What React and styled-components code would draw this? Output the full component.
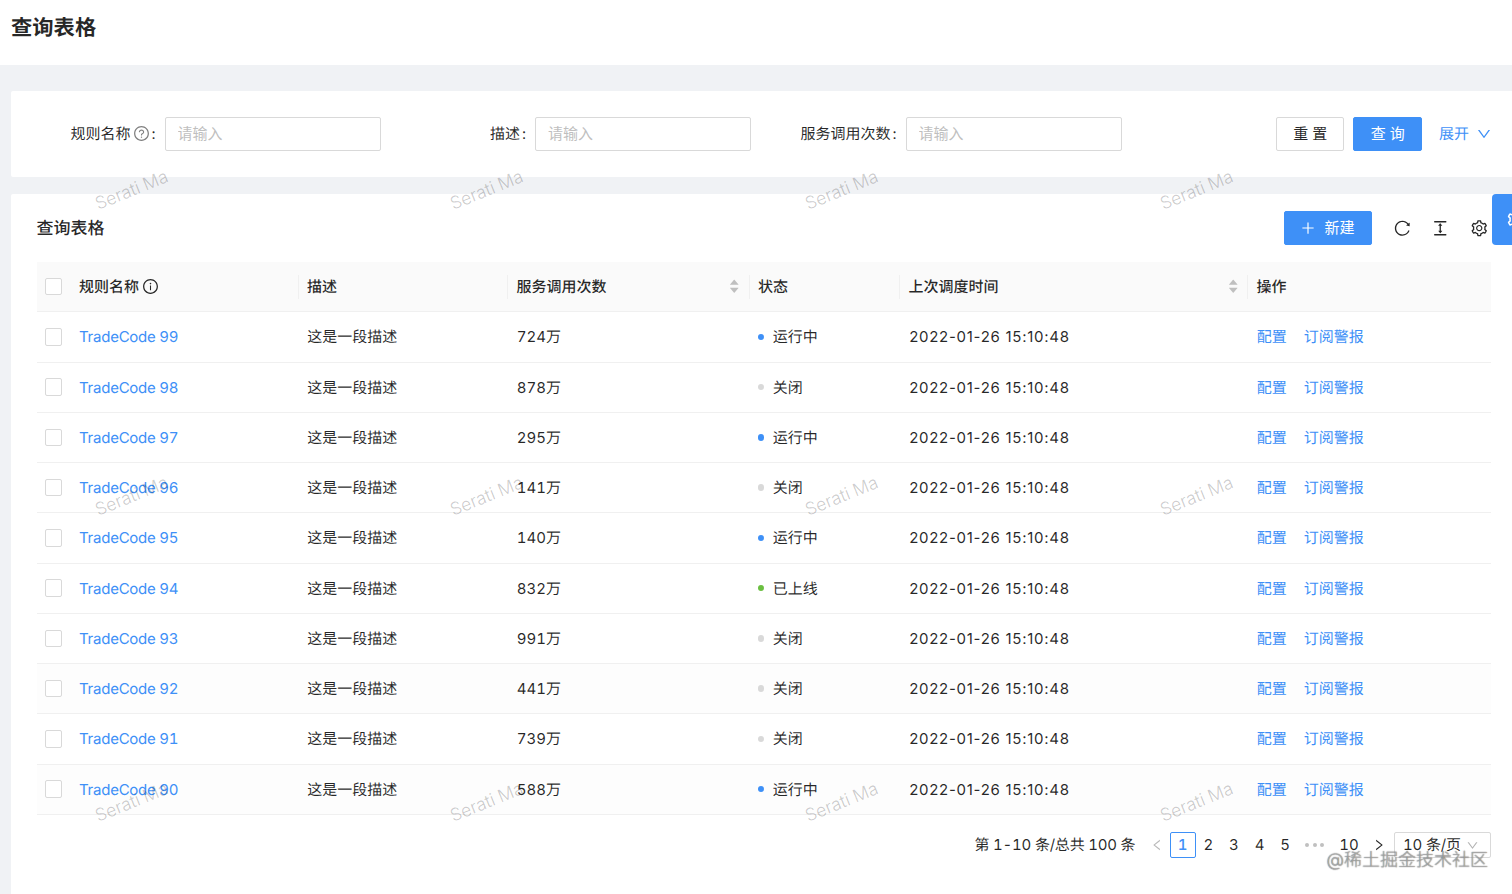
import { useState } from "react";
import styled, { createGlobalStyle, css } from "styled-components";
import {
  AiOutlineQuestionCircle,
  AiOutlineInfoCircle,
  AiOutlineReload,
  AiOutlineColumnHeight,
  AiOutlineSetting,
  AiOutlinePlus,
  AiOutlineDown,
  AiOutlineLeft,
  AiOutlineRight,
  AiFillCaretUp,
  AiFillCaretDown,
} from "react-icons/ai";

const GlobalStyle = createGlobalStyle`
  * {
    box-sizing: border-box;
  }

  body {
    margin: 0;
    overflow: hidden;
    background: #f0f2f5;
    color: rgba(0, 0, 0, 0.85);
    font-family: Inter, "Noto Sans CJK SC", sans-serif;
    font-size: 15px;
    font-variant-numeric: tabular-nums;
    line-height: 24px;
    text-rendering: geometricPrecision;
  }

  button, input {
    font: inherit;
  }
`;

const Page = styled.div`
  position: relative;
  width: 1512px;
  height: 894px;
  overflow: hidden;
  display: flex;
  flex-direction: column;
`;

const PageHeader = styled.header`
  height: 65px;
  padding: 12px 11px 0;
  background: #fff;
`;

const PageTitle = styled.h1`
  margin: 0;
  font-size: 21.3px;
  font-weight: 600;
  line-height: 32px;
`;

const Content = styled.main`
  flex: 1;
  display: flex;
  flex-direction: column;
  gap: 17.5px;
  padding: 26px 0 0 11px;
`;

const FilterCard = styled.section`
  height: 85.5px;
  display: flex;
  align-items: center;
  padding-right: 20px;
  background: #fff;
  border-radius: 2px 0 0 2px;
`;

const Field = styled.label`
  width: ${({ $width }) => $width}px;
  display: flex;
  align-items: center;
  justify-content: flex-end;
  white-space: nowrap;
`;

const HelpIcon = styled(AiOutlineQuestionCircle)`
  margin-left: 3px;
  font-size: 17px;
  color: rgba(0, 0, 0, 0.5);
`;

const Colon = styled.span`
  margin: 0 9px 0 ${({ $tight }) => ($tight ? 1 : 2)}px;
`;

const TextInput = styled.input`
  width: 216px;
  height: 34px;
  padding: 0 12px;
  border: 1px solid #d9d9d9;
  border-radius: 2px;
  outline: none;

  &::placeholder {
    color: #bfbfbf;
  }
`;

const FilterActions = styled.div`
  margin-left: auto;
  display: flex;
  align-items: center;
  gap: 9px;
`;

const Button = styled.button`
  width: ${({ $width }) => $width}px;
  height: 34px;
  display: flex;
  align-items: center;
  justify-content: center;
  gap: ${({ $gap }) => $gap || 0}px;
  padding: 0;
  border: 1px solid #d9d9d9;
  border-radius: 2px;
  background: #fff;
  color: rgba(0, 0, 0, 0.85);
  cursor: pointer;

  ${({ $primary }) =>
    $primary &&
    css`
      border-color: #3e90f7;
      background: #3e90f7;
      color: #fff;
    `}
`;

const ExpandLink = styled.a`
  margin-left: 8px;
  display: flex;
  align-items: center;
  gap: 7px;
  color: #3e90f7;
  cursor: pointer;
`;

const TableCard = styled.section`
  flex: 1;
  padding: 0 21px 0 25.5px;
  background: #fff;
  border-radius: 2px 0 0 0;
`;

const Toolbar = styled.div`
  height: 68px;
  display: flex;
  align-items: center;
  justify-content: space-between;
`;

const ToolbarTitle = styled.h2`
  margin: 0;
  padding-top: 1px;
  font-size: 17px;
  font-weight: 500;
`;

const ToolbarActions = styled.div`
  display: flex;
  align-items: center;
  gap: 20px;
  margin-right: 3px;
  font-size: 18.5px;

  button {
    margin-right: 1px;
    font-size: 15px;
  }
`;

const Row = styled.div`
  height: 50.25px;
  display: grid;
  grid-template-columns: 34px 228px 209.5px 241.5px 150.5px 348px 1fr;
  align-items: center;
  border-bottom: 1px solid #f0f0f0;
  background: ${({ $head, $shaded }) =>
    $head ? "#fafafa" : $shaded ? "#fdfdfd" : "#fff"};
  font-weight: ${({ $head }) => ($head ? 500 : 400)};
`;

const Cell = styled.div`
  height: 24px;
  display: flex;
  align-items: center;
  padding: 0 8.5px;
  white-space: nowrap;
  border-right: ${({ $divider }) => ($divider ? "1px solid #f0f0f0" : "0")};
`;

const BodyCell = styled(Cell)`
  padding: 1px 8.5px 0 8.8px;
  height: 25px;
`;

const NameCell = styled(BodyCell)`
  padding-left: 8.5px;
  letter-spacing: -0.24px;
`;

const TimeCell = styled(BodyCell)`
  padding-left: 9.2px;
  font-variant-numeric: normal;
  letter-spacing: 0.72px;
`;

const Checkbox = styled.button`
  flex: none;
  width: 17.5px;
  height: 17.5px;
  margin-left: -0.5px;
  padding: 0;
  border: 1px solid ${({ $checked }) => ($checked ? "#3e90f7" : "#d9d9d9")};
  border-radius: 2px;
  background: ${({ $checked }) => ($checked ? "#3e90f7" : "#fff")};
`;

const InfoIcon = styled(AiOutlineInfoCircle)`
  margin-left: 3px;
  font-size: 17px;
`;

const Sorter = styled.span`
  margin-left: auto;
  margin-right: -0.5px;
  display: flex;
  flex-direction: column;
  color: #bfbfbf;
  font-size: 12.5px;

  svg + svg {
    margin-top: -4.5px;
  }
`;

const Link = styled.a`
  color: #3e90f7;
  cursor: pointer;

  & + & {
    margin-left: 17px;
  }
`;

const Dot = styled.i`
  width: 6.5px;
  height: 6.5px;
  margin: -1px 8.5px 0 -0.5px;
  border-radius: 50%;
  background: ${({ $color }) => $color};
`;

const Pagination = styled.nav`
  height: 61px;
  display: flex;
  align-items: center;
  justify-content: flex-end;
`;

const Total = styled.span`
  margin-right: 9px;
  letter-spacing: -0.22px;
`;

const PageItem = styled.span`
  width: ${({ $width }) => $width || 25.6}px;
  height: 25.6px;
  display: flex;
  align-items: center;
  justify-content: center;
  border: 1px solid ${({ $active }) => ($active ? "#3e90f7" : "transparent")};
  border-radius: 2px;
  color: ${({ $active, $muted }) =>
    $active ? "#3e90f7" : $muted ? "rgba(0, 0, 0, 0.28)" : "inherit"};
  font-weight: ${({ $active }) => ($active ? 500 : 400)};
  cursor: pointer;

  svg {
    font-size: 14px;
  }
`;

const Ellipsis = styled.span`
  width: 34px;
  display: flex;
  justify-content: center;
  gap: 3.5px;

  i {
    width: 4px;
    height: 4px;
    border-radius: 50%;
    background: #c0c0c0;
  }
`;

const SizeSelect = styled.div`
  width: 97px;
  height: 25.6px;
  margin-left: 2.5px;
  padding: 0 11px 0 8px;
  display: flex;
  align-items: center;
  justify-content: space-between;
  border: 1px solid #d9d9d9;
  border-radius: 2px;
  letter-spacing: -0.2px;
  white-space: nowrap;

  svg {
    font-size: 13px;
    color: rgba(0, 0, 0, 0.3);
  }
`;

const SettingHandle = styled.button`
  position: absolute;
  top: 194px;
  right: -31px;
  width: 51px;
  height: 51px;
  padding: 0 0 0 14px;
  display: flex;
  align-items: center;
  border: 0;
  border-radius: 4px 0 0 4px;
  background: #3e90f7;
  color: #fff;
  font-size: 21px;
`;

const WatermarkLayer = styled.div`
  position: absolute;
  top: 166px;
  left: 82px;
  display: grid;
  grid-template-columns: repeat(4, 355px);
  grid-auto-rows: 306px;
  pointer-events: none;
`;

const Watermark = styled.span`
  width: 100px;
  height: 50px;
  display: flex;
  align-items: center;
  justify-content: center;
  transform: rotate(-22deg);
  color: rgba(0, 0, 0, 0.21);
  font-size: 17.6px;
  font-weight: 300;
  white-space: nowrap;
`;

const SiteMark = styled.span`
  position: absolute;
  right: 24px;
  bottom: 20px;
  color: rgba(225, 225, 225, 0.6);
  font-size: 18px;
  font-weight: 300;
  line-height: 26px;
  white-space: nowrap;
  text-shadow: 0 0 1px rgba(0, 0, 0, 0.85);
`;

const STATUS = {
  running: { text: "运行中", color: "#3e90f7" },
  closed: { text: "关闭", color: "#d9d9d9" },
  online: { text: "已上线", color: "#6abf40" },
};

const rules = [
  { id: 99, calls: 724, status: "running" },
  { id: 98, calls: 878, status: "closed" },
  { id: 97, calls: 295, status: "running" },
  { id: 96, calls: 141, status: "closed" },
  { id: 95, calls: 140, status: "running" },
  { id: 94, calls: 832, status: "online" },
  { id: 93, calls: 991, status: "closed" },
  { id: 92, calls: 441, status: "closed", shaded: true },
  { id: 91, calls: 739, status: "closed" },
  { id: 90, calls: 588, status: "running", shaded: true },
];

const SortIcons = () => (
  <Sorter>
    <AiFillCaretUp />
    <AiFillCaretDown />
  </Sorter>
);

const FilterField = ({ label, width, help }) => (
  <Field $width={width}>
    {label}
    {help && <HelpIcon />}
    <Colon $tight={help}>:</Colon>
    <TextInput placeholder="请输入" />
  </Field>
);

const App = () => {
  const [selected, setSelected] = useState([]);
  const [page, setPage] = useState(1);

  const toggle = (id) =>
    setSelected((prev) =>
      prev.includes(id) ? prev.filter((x) => x !== id) : [...prev, id]
    );

  const toggleAll = () =>
    setSelected(selected.length === rules.length ? [] : rules.map((r) => r.id));

  return (
    <Page>
      <GlobalStyle />
      <PageHeader>
        <PageTitle>查询表格</PageTitle>
      </PageHeader>

      <Content>
        <FilterCard>
          <FilterField label="规则名称" width={369.5} help />
          <FilterField label="描述" width={370.5} />
          <FilterField label="服务调用次数" width={370.5} />
          <FilterActions>
            <Button $width={68.5} $gap={4}>
              <span>重</span>
              <span>置</span>
            </Button>
            <Button $width={68.5} $gap={4} $primary>
              <span>查</span>
              <span>询</span>
            </Button>
            <ExpandLink>
              展开
              <AiOutlineDown size={16} />
            </ExpandLink>
          </FilterActions>
        </FilterCard>

        <TableCard>
          <Toolbar>
            <ToolbarTitle>查询表格</ToolbarTitle>
            <ToolbarActions>
              <Button $width={88} $gap={8} $primary>
                <AiOutlinePlus size={16} />
                新建
              </Button>
              <AiOutlineReload />
              <AiOutlineColumnHeight />
              <AiOutlineSetting />
            </ToolbarActions>
          </Toolbar>

          <Row $head>
            <Cell>
              <Checkbox
                $checked={selected.length === rules.length}
                onClick={toggleAll}
              />
            </Cell>
            <Cell $divider>
              规则名称
              <InfoIcon />
            </Cell>
            <Cell $divider>描述</Cell>
            <Cell $divider>
              服务调用次数
              <SortIcons />
            </Cell>
            <Cell $divider>状态</Cell>
            <Cell $divider>
              上次调度时间
              <SortIcons />
            </Cell>
            <Cell>操作</Cell>
          </Row>

          {rules.map((rule) => (
            <Row key={rule.id} $shaded={rule.shaded}>
              <Cell>
                <Checkbox
                  $checked={selected.includes(rule.id)}
                  onClick={() => toggle(rule.id)}
                />
              </Cell>
              <NameCell>
                <Link>TradeCode {rule.id}</Link>
              </NameCell>
              <BodyCell>这是一段描述</BodyCell>
              <BodyCell>{rule.calls}万</BodyCell>
              <BodyCell>
                <Dot $color={STATUS[rule.status].color} />
                {STATUS[rule.status].text}
              </BodyCell>
              <TimeCell>2022-01-26 15:10:48</TimeCell>
              <BodyCell>
                <Link>配置</Link>
                <Link>订阅警报</Link>
              </BodyCell>
            </Row>
          ))}

          <Pagination>
            <Total>第 1-10 条/总共 100 条</Total>
            <PageItem $muted>
              <AiOutlineLeft />
            </PageItem>
            {[1, 2, 3, 4, 5].map((n) => (
              <PageItem key={n} $active={n === page} onClick={() => setPage(n)}>
                {n}
              </PageItem>
            ))}
            <Ellipsis>
              <i />
              <i />
              <i />
            </Ellipsis>
            <PageItem $width={34}>10</PageItem>
            <PageItem>
              <AiOutlineRight />
            </PageItem>
            <SizeSelect>
              10 条/页
              <AiOutlineDown />
            </SizeSelect>
          </Pagination>
        </TableCard>
      </Content>

      <SettingHandle>
        <AiOutlineSetting />
      </SettingHandle>

      <WatermarkLayer>
        {Array.from({ length: 12 }, (_, i) => (
          <Watermark key={i}>Serati Ma</Watermark>
        ))}
      </WatermarkLayer>

      <SiteMark>@稀土掘金技术社区</SiteMark>
    </Page>
  );
};

export default App;
